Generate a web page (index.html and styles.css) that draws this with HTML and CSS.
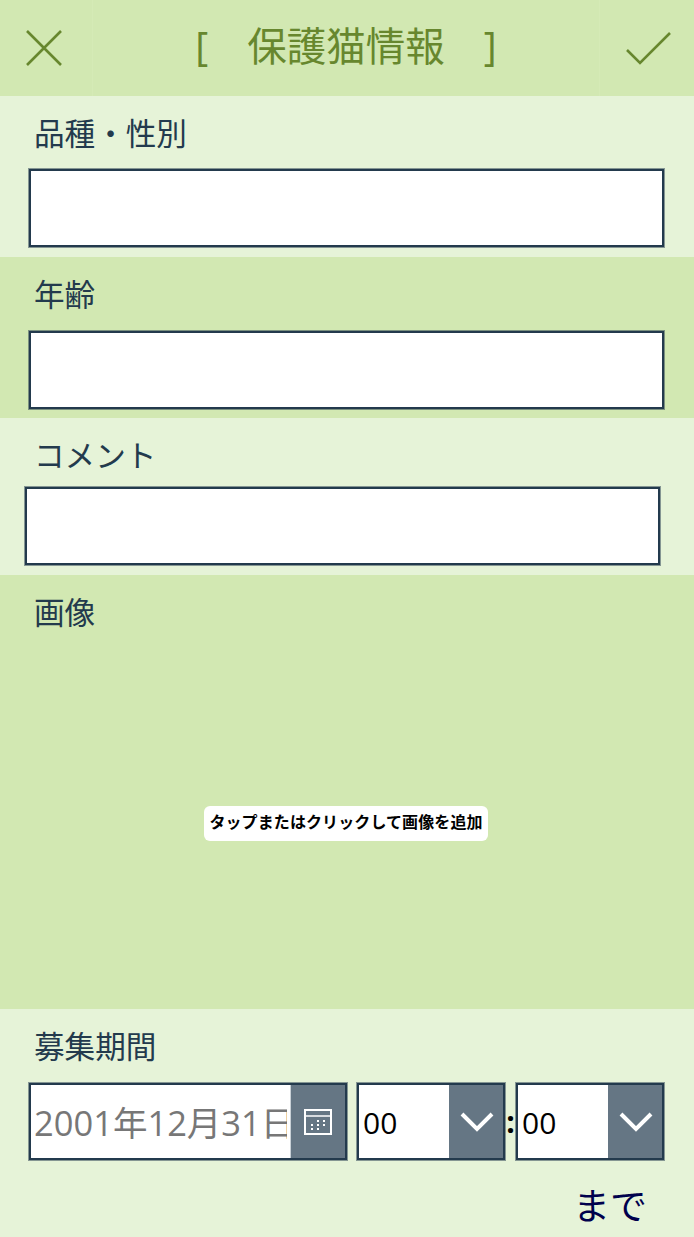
FILE: index.html
```html
<!DOCTYPE html>
<html lang="ja">
<head>
<meta charset="utf-8">
<title>保護猫情報</title>
<link rel="stylesheet" href="styles.css">
</head>
<body>
<div class="screen">
  <header class="header">
    <div class="hbtn hbtn-left">
      <svg class="hicon" width="40" height="40" viewBox="0 0 40 40"><path d="M3 3 L37 37 M37 3 L3 37" fill="none" stroke="#67872e" stroke-width="2.6"/></svg>
    </div>
    <div class="title"><span>[</span><span class="title-main">保護猫情報</span><span>]</span></div>
    <div class="hbtn hbtn-right">
      <svg class="hicon" width="48" height="36" viewBox="0 0 48 36"><path d="M2 20 L15 33 L45 3" fill="none" stroke="#67872e" stroke-width="2.6"/></svg>
    </div>
  </header>

  <section class="sec sec-light sec-field">
    <div class="label">品種・性別</div>
    <div class="input"></div>
  </section>

  <section class="sec sec-dark sec-field sec-age">
    <div class="label">年齢</div>
    <div class="input"></div>
  </section>

  <section class="sec sec-light sec-comment">
    <div class="label">コメント</div>
    <div class="input input-shift"></div>
  </section>

  <section class="sec sec-dark sec-image">
    <div class="label">画像</div>
    <div class="image-area"><div class="add-image">タップまたはクリックして画像を追加</div></div>
  </section>

  <section class="sec sec-light sec-period">
    <div class="label">募集期間</div>
    <div class="period-row">
      <div class="control control-date">
        <div class="value value-date">2001年12月31日</div>
        <div class="cbtn cbtn-date">
          <svg width="28" height="26" viewBox="0 0 28 26"><rect x="1" y="1" width="26" height="24" fill="none" stroke="#fff" stroke-width="2"/><path d="M1 7H27" stroke="#fff" stroke-width="1.5"/><path d="M13 11h2v2h-2zM19 11h2v2h-2zM7 15h2v2H7zM13 15h2v2h-2zM19 15h2v2h-2zM7 19h2v2H7zM13 19h2v2h-2z" fill="#fff"/></svg>
        </div>
      </div>
      <div class="control control-time">
        <div class="value">00</div>
        <div class="cbtn cbtn-time">
          <svg width="34" height="22" viewBox="0 0 34 22"><path d="M2 3 L17 18 L32 3" fill="none" stroke="#fff" stroke-width="4"/></svg>
        </div>
      </div>
      <div class="colon">:</div>
      <div class="control control-time">
        <div class="value">00</div>
        <div class="cbtn cbtn-time">
          <svg width="34" height="22" viewBox="0 0 34 22"><path d="M2 3 L17 18 L32 3" fill="none" stroke="#fff" stroke-width="4"/></svg>
        </div>
      </div>
    </div>
    <div class="until">まで</div>
  </section>
</div>
</body>
</html>
```
FILE: styles.css
```css
* { box-sizing: border-box; }
html, body { margin: 0; padding: 0; }
body {
  font-family: "Open Sans", "Noto Sans CJK JP", sans-serif;
  background: #e6f3d8;
}
.screen {
  width: 694px;
  height: 1237px;
  overflow: hidden;
  display: flex;
  flex-direction: column;
}
.header {
  height: 96px;
  background: #d2e8b2;
  display: flex;
  align-items: center;
  justify-content: space-between;
}
.hbtn {
  width: 93px;
  height: 96px;
  display: flex;
  align-items: center;
}
.hbtn-left { padding-left: 24px; border-right: 1px solid #d5eab6; }
.hbtn-right { width: 95px; padding-left: 25px; border-left: 1px solid #d5eab6; }
.title {
  flex: 1;
  display: flex;
  justify-content: center;
  gap: 39px;
  font-size: 39.5px;
  line-height: 92px;
  height: 96px;
  color: #67872e;
}
.sec { padding-left: 29px; padding-right: 30px; }
.sec-light { background: #e6f3d8; }
.sec-dark { background: #d2e8b2; }
.sec-field { height: 161px; }
.sec-comment { height: 157px; }
.sec-image { height: 434px; display: flex; flex-direction: column; }
.sec-period { flex: 1; }
.label {
  font-size: 30.6px;
  line-height: 40px;
  color: #233a4d;
  padding-left: 5px;
  padding-top: 17px;
  height: 73px;
}
.sec-age .label { height: 74px; }
.sec-comment .label { height: 69px; }
.sec-image .label { height: 73px; }
.sec-period .label { height: 74px; }
.input {
  height: 78px;
  background: #fff;
  border: 2px solid #233a4d;
  box-shadow: 0 0 0 1px rgba(35, 58, 77, 0.5);
}
.input-shift { margin-left: -4px; margin-right: 4px; }
.image-area {
  flex: 1;
  display: flex;
  align-items: center;
  justify-content: center;
  padding-bottom: 10px;
}
.add-image {
  width: 284px;
  height: 35px;
  background: #fff;
  border-radius: 6px;
  color: #000;
  font-size: 16px;
  letter-spacing: 0.1px;
  font-weight: 700;
  line-height: 32px;
  text-align: center;
  white-space: nowrap;
  margin-right: 1px;
}
.period-row {
  display: flex;
  align-items: center;
  height: 77px;
}
.control {
  height: 77px;
  display: flex;
  background: #fff;
  border: 2px solid #233a4d;
  box-shadow: 0 0 0 1px rgba(35, 58, 77, 0.5);
}
.control-date { width: 318px; }
.control-time { width: 148px; }
.control-date + .control-time { margin-left: 10px; }
.value {
  flex: 1;
  min-width: 0;
  overflow: hidden;
  white-space: nowrap;
  font-size: 30px;
  line-height: 75px;
  color: #000;
  padding-left: 4px;
}
.value-date { color: #777; font-size: 34.5px; padding-left: 3px; margin-right: 3px; }
.cbtn {
  width: 54px;
  background: #657684;
  display: flex;
  align-items: center;
  justify-content: center;
  flex: none;
}
.cbtn-time { padding-left: 2px; }
.cbtn-date { width: 55px; border-left: 1px solid #c8d0d6; }
.colon {
  width: 11px;
  text-align: center;
  font-size: 30px;
  font-weight: 700;
  line-height: 75px;
  color: #000;
}
.until {
  font-size: 37px;
  line-height: 46px;
  color: #00004d;
  text-align: right;
  padding-top: 23px;
  padding-right: 17px;
}
```
